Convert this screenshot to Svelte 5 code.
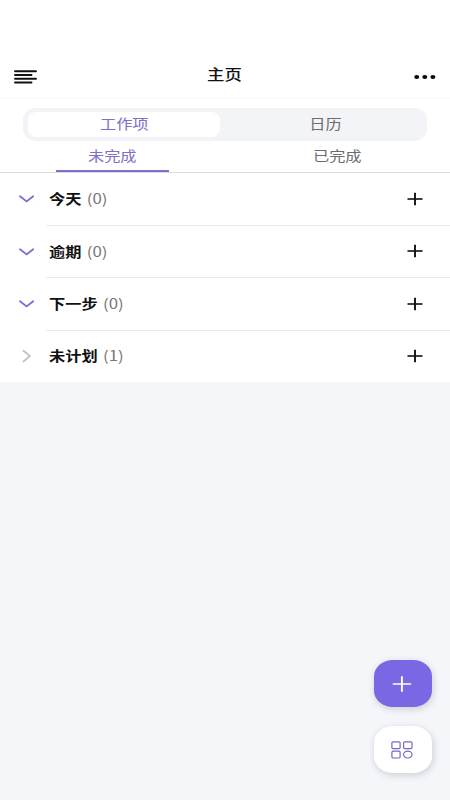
<script lang="ts">
	interface Group {
		name: string;
		count: number;
		open: boolean;
	}

	const segments = ['工作项', '日历'];
	const tabs = ['未完成', '已完成'];

	let segment = $state(0);
	let tab = $state(0);
	let groups = $state<Group[]>([
		{ name: '今天', count: 0, open: true },
		{ name: '逾期', count: 0, open: true },
		{ name: '下一步', count: 0, open: true },
		{ name: '未计划', count: 1, open: false },
	]);
</script>

<div class="page">
	<header>
		<button class="menu" aria-label="菜单">
			<svg width="24" height="16" viewBox="0 0 24 16" stroke="#111" stroke-width="1.9" stroke-linecap="round">
				<path d="M2 2.2h21M2 6h16.5M2 9.8h21M2 13.5h16.5" />
			</svg>
		</button>
		<h1><span class="wide">主页</span></h1>
		<button class="more" aria-label="更多">
			<svg width="22" height="6" viewBox="0 0 22 6" fill="#0a0a0a">
				<ellipse cx="2.7" cy="3" rx="2.5" ry="2.1" />
				<ellipse cx="10.8" cy="3" rx="2.5" ry="2.1" />
				<ellipse cx="18.9" cy="3" rx="2.5" ry="2.1" />
			</svg>
		</button>
	</header>

	<div class="switcher">
		<div class="segmented">
			{#each segments as label, i}
				<button class:active={segment === i} onclick={() => (segment = i)}>
					<span class="wide">{label}</span>
				</button>
			{/each}
		</div>
	</div>

	<nav>
		{#each tabs as label, i}
			<button class:active={tab === i} onclick={() => (tab = i)}>
				<span class="wide">{label}</span>
			</button>
		{/each}
	</nav>

	<ul>
		{#each groups as group}
			<li>
				<button class="toggle" aria-label="展开" onclick={() => (group.open = !group.open)}>
					<svg width="17" height="14" viewBox="0 0 17 14" fill="none" stroke-width="1.9" stroke-linecap="round">
						{#if group.open}
							<path d="M2 4.3l6.6 5.1 6.6-5.1" stroke="#7c70cc" />
						{:else}
							<path d="M5.5 1.8l6.3 5.3-6.3 5.3" stroke="#c4c4c6" />
						{/if}
					</svg>
				</button>
				<div class="line">
					<span class="wide label"><strong>{group.name}</strong><span class="count">({group.count})</span></span>
					<button class="add" aria-label="添加">
						<svg width="16" height="14" viewBox="0 0 16 14" fill="none" stroke="#111">
							<path d="M.5 7h15" stroke-width="1.6" />
							<path d="M8 .8v12.4" stroke-width="1.9" />
						</svg>
					</button>
				</div>
			</li>
		{/each}
	</ul>

	<div class="fabs">
		<button class="fab primary" aria-label="新建">
			<svg width="20" height="16" viewBox="0 0 20 16" fill="none" stroke="#fff" stroke-linecap="round">
				<path d="M1.3 8h17.2" stroke-width="1.6" />
				<path d="M9.9 1v14" stroke-width="1.9" />
			</svg>
		</button>
		<button class="fab" aria-label="应用">
			<svg width="22" height="18" viewBox="0 0 22 18" fill="none" stroke="#7568bd" stroke-width="1.2">
				<rect x=".9" y=".8" width="8.2" height="6.8" rx="1.2" />
				<rect x="12.6" y=".8" width="8.4" height="6.8" rx="1.2" />
				<rect x=".9" y="10.2" width="8.2" height="6.8" rx="1.2" />
				<ellipse cx="16.8" cy="13.6" rx="4.3" ry="3.4" />
			</svg>
		</button>
	</div>
</div>

<style>
	:global(body) {
		margin: 0;
		background: #f5f6fa;
	}
	.page {
		height: 800px;
		overflow: hidden;
		background: #f5f6fa;
		font-family: 'Noto Sans CJK SC', 'Noto Sans', sans-serif;
		font-size: 13.5px;
		color: #6c6c70;
	}
	button {
		display: flex;
		align-items: center;
		justify-content: center;
		padding: 0;
		border: 0;
		background: none;
		font: inherit;
		color: inherit;
	}
	svg {
		display: block;
		flex: none;
	}
	.wide {
		display: inline-block;
		transform: scaleX(1.2);
		white-space: nowrap;
	}
	header {
		display: grid;
		grid-template-columns: 24px 1fr 22px;
		align-items: center;
		box-sizing: border-box;
		height: 99px;
		padding: 55px 14px 0 13px;
		background: #fff;
		border-bottom: 1px solid #f8f8f9;
	}
	h1 {
		margin: -7px 3px 0 0;
		font-size: 14.5px;
		font-weight: 500;
		text-align: center;
		color: #111;
	}
	.switcher {
		padding: 9px 23px 0;
		background: #fff;
	}
	.segmented {
		display: grid;
		grid-template-columns: 192px 1fr;
		box-sizing: border-box;
		height: 33px;
		padding: 4px 0 4px 5px;
		background: #f3f4f7;
		border-radius: 13px / 11px;
	}
	.segmented button {
		padding: 0 0 4px 3px;
		border-radius: 9px / 8px;
	}
	.segmented .active {
		padding-left: 0;
		background: #fff;
		color: #7c70c8;
	}
	nav {
		display: grid;
		grid-template-columns: 1fr 1fr;
		justify-items: center;
		height: 31px;
		background: #fff;
		border-bottom: 1px solid #dcdcdf;
	}
	nav button {
		box-sizing: border-box;
		width: 113px;
		padding-bottom: 2px;
		border-bottom: 2px solid transparent;
	}
	nav .active {
		border-bottom-color: #7c70cc;
		color: #7c70c8;
	}
	ul {
		margin: 0;
		padding: 0;
		list-style: none;
		background: #fff;
	}
	li {
		display: flex;
		height: 52.5px;
	}
	li:last-child {
		height: 51.5px;
	}
	.toggle {
		box-sizing: border-box;
		width: 46px;
		padding-left: 6px;
	}
	.line {
		display: flex;
		flex: 1;
		align-items: center;
		justify-content: space-between;
		padding: 0 27px 0 3px;
		border-bottom: 1px solid #e9e9eb;
	}
	li:last-child .line {
		border-bottom-color: transparent;
	}
	.label {
		margin-top: -1.5px;
		transform-origin: left;
	}
	strong {
		font-weight: 700;
		color: #111;
	}
	.count {
		margin-left: 4.5px;
		font-size: 14px;
		color: #77777b;
	}
	.fabs {
		position: absolute;
		top: 660px;
		left: 374px;
		display: grid;
		gap: 19px;
	}
	.fab {
		width: 58px;
		height: 47px;
		padding-right: 2px;
		border-radius: 19px / 16px;
		background: #fff;
		box-shadow: 1px 2px 7px rgba(40, 40, 60, 0.2);
	}
	.primary {
		background: #7967e3;
	}
</style>
